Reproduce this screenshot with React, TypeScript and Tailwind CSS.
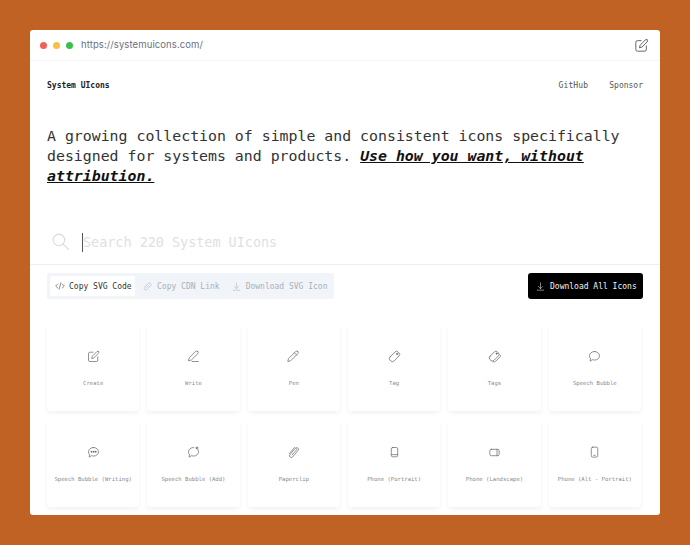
import type { ReactNode } from "react";

const Icon = ({ children, className = "w-[15px] h-[15px]" }: { children: ReactNode; className?: string }) => (
  <svg viewBox="0 0 21 21" fill="none" stroke="currentColor" strokeLinecap="round" strokeLinejoin="round" className={className}>
    {children}
  </svg>
);

const CreateIcon = () => (
  <>
    <path d="M10 4.5H5.5a2 2 0 0 0-2 2v9a2 2 0 0 0 2 2h9a2 2 0 0 0 2-2V11" />
    <path d="M17.5 3.5a1.8 1.8 0 0 1 0 2.5L11 12.5l-3 .8.8-3 6.5-6.8a1.6 1.6 0 0 1 2.2 0z" />
  </>
);

const DownloadIcon = () => (
  <>
    <path d="M10.5 3.5v11" />
    <path d="M6.5 10.5l4 4 4-4" />
    <path d="M4.5 17.5h12" />
  </>
);

const bubble = "M10.5 3.5c4 0 7 2.7 7 6s-3 6-7 6c-1 0-2-.2-2.9-.5L4.5 17l.4-3.6c-1-1-1.4-2.4-1.4-3.9 0-3.3 3-6 7-6z";

const icons: { label: string; icon: ReactNode }[] = [
  { label: "Create", icon: <CreateIcon /> },
  {
    label: "Write",
    icon: (
      <>
        <path d="M16.5 3.5a2 2 0 0 1 0 3l-9 9-4 1 1-4 9-9a2 2 0 0 1 3 0z" />
        <path d="M8.5 17.5h9" />
      </>
    ),
  },
  {
    label: "Pen",
    icon: (
      <>
        <path d="M16.5 3.5a2 2 0 0 1 0 3l-10 10-4 1 1-4 10-10a2 2 0 0 1 3 0z" />
        <path d="M12 5.5l3 3" />
      </>
    ),
  },
  {
    label: "Tag",
    icon: (
      <>
        <rect x="2.5" y="6.5" width="16" height="8" rx="3" transform="rotate(-45 10.5 10.5)" />
        <circle cx="14" cy="7" r=".8" fill="currentColor" />
      </>
    ),
  },
  {
    label: "Tags",
    icon: (
      <>
        <rect x="2.5" y="6" width="15" height="8" rx="3" transform="rotate(-45 10 10)" />
        <path d="M18.5 8.5c.5 1 .3 2-.5 2.8l-6 6c-1 1-2.5 1-3.5.2" />
        <circle cx="13.5" cy="6.5" r=".8" fill="currentColor" />
      </>
    ),
  },
  {
    label: "Speech Bubble",
    icon: <path d={bubble} />,
  },
  {
    label: "Speech Bubble (Writing)",
    icon: (
      <>
        <path d={bubble} />
        <circle cx="7.5" cy="9.5" r=".7" fill="currentColor" />
        <circle cx="10.5" cy="9.5" r=".7" fill="currentColor" />
        <circle cx="13.5" cy="9.5" r=".7" fill="currentColor" />
      </>
    ),
  },
  {
    label: "Speech Bubble (Add)",
    icon: (
      <>
        <path d="M14 4.2c2.1.9 3.5 2.8 3.5 5.3 0 3.3-3 6-7 6-1 0-2-.2-2.9-.5L4.5 17l.4-3.6c-1-1-1.4-2.4-1.4-3.9 0-3.3 3-6 7-6" />
        <path d="M15.5 2.5v3M14 4h3" />
      </>
    ),
  },
  {
    label: "Paperclip",
    icon: (
      <>
        <path d="M15 3.5a2.5 2.5 0 0 1 2 4L9.500 16.5a2.5 2.5 0 0 1-4-3L12.5 5a1.5 1.5 0 0 1 2.5 1.5l-6.5 7.5" />
        <path d="M12 3.5L4.500 12" />
      </>
    ),
  },
  {
    label: "Phone (Portrait)",
    icon: (
      <>
        <rect x="6" y="3.5" width="9" height="13" rx="2" />
        <path d="M6 13.5h9" />
      </>
    ),
  },
  {
    label: "Phone (Landscape)",
    icon: (
      <>
        <rect x="4" y="6" width="13" height="9" rx="2" />
        <path d="M14 6v9" />
      </>
    ),
  },
  {
    label: "Phone (Alt - Portrait)",
    icon: (
      <>
        <rect x="6" y="3" width="9" height="14" rx="2" />
        <path d="M9.5 14.500h2" />
      </>
    ),
  },
];

const mono = "font-['DejaVu_Sans_Mono',monospace]";

export default function App() {
  return (
    <div className="h-[545px] w-[690px] overflow-hidden bg-[#c06224] pt-[30px] pl-[30px]">
      <div className={`flex h-[485px] w-[630px] flex-col overflow-hidden rounded-[3px] bg-white ${mono}`}>
        {/* Browser bar */}
        <div className="flex h-[31px] shrink-0 items-center border-b border-[#f5f5f5] pr-[10px] pl-[10px]">
          <span className="h-[7px] w-[7px] rounded-full bg-[#f25f58]" />
          <span className="ml-[6px] h-[7px] w-[7px] rounded-full bg-[#fbbe3f]" />
          <span className="ml-[6px] h-[7px] w-[7px] rounded-full bg-[#3ac04a]" />
          <span className="ml-[8px] font-['Inter',sans-serif] text-[9.5px] tracking-[0.1px] text-[#6b7280]">https://systemuicons.com/</span>
          <div className="ml-auto text-[#444]">
            <Icon className="h-[17px] w-[17px]"><CreateIcon /></Icon>
          </div>
        </div>

        {/* Nav */}
        <nav className="mt-[19px] flex items-center justify-between pr-[17px] pl-[17px] text-[8px] leading-[12px]">
          <span className="font-bold text-[#222]">System UIcons</span>
          <div className="flex gap-[21px] text-[#555]">
            <span className="tracking-[0.15px]">GitHub</span>
            <span>Sponsor</span>
          </div>
        </nav>

        {/* Hero */}
        <p className="mt-[34px] w-[610px] pl-[17px] text-[14.86px] leading-[20px] text-[#333]">
          A growing collection of simple and consistent icons specifically designed for systems and products.{" "}
          <strong className="font-bold text-[#111] italic underline">Use how you want, without attribution.</strong>
        </p>

        {/* Search */}
        <div className="mt-[34px] flex h-[45px] shrink-0 items-center border-b border-[#eeeeee] pl-[20px] text-[#d5dae0]">
          <Icon className="h-[22px] w-[22px]">
            <circle cx="8.5" cy="8.5" r="5.5" />
            <path d="M17.5 17.5l-5-5" />
          </Icon>
          <span className="ml-[10px] h-[19px] w-px bg-[#555]" />
          <span className="pt-[2px] text-[13.45px] text-[#dde1e6]">Search 220 System UIcons</span>
        </div>

        {/* Toolbar */}
        <div className="mt-[8px] flex items-center justify-between pr-[17px] pl-[17px] leading-[12px]">
          <div className="flex h-[26px] w-[287px] items-center rounded-[2px] bg-[#f1f4f8] pl-[3px] text-[8px] text-[#a9b1bb]">
            <div className="flex h-[20px] w-[85px] items-center gap-[3px] rounded-[2px] bg-white pl-[4px] font-medium text-[#333]">
              <Icon className="h-[12px] w-[12px]">
                <path d="M6.5 7l-3.5 3.5 3.500 3.500M14.500 7l3.500 3.500-3.500 3.500M12 5l-3 11" />
              </Icon>
              <span className="pt-[2px]">Copy SVG Code</span>
            </div>
            <div className="ml-[7px] flex items-center gap-[4px]">
              <Icon className="h-[11px] w-[11px]">
                <path d="M9 12l3-3M8 8.5L5 11.5a3 3 0 0 0 4.5 4.5l3-3M13 12.5l3-3A3 3 0 0 0 11.5 5l-3 3" />
              </Icon>
              <span className="pt-[2px]">Copy CDN Link</span>
            </div>
            <div className="ml-[11px] flex items-center gap-[4px]">
              <Icon className="h-[11px] w-[11px]"><DownloadIcon /></Icon>
              <span className="pt-[2px]">Download SVG Icon</span>
            </div>
          </div>
          <div className="flex h-[26px] w-[115px] items-center gap-[4px] rounded-[3px] bg-black pl-[7px] text-[8px] text-[#f5f5f5]">
            <Icon className="h-[11px] w-[11px]"><DownloadIcon /></Icon>
            <span className="pt-[2px]">Download All Icons</span>
          </div>
        </div>

        {/* Icon grid */}
        <div className="mt-[26px] grid grid-cols-6 gap-x-[8px] gap-y-[10px] pr-[19px] pl-[17px]">
          {icons.map((item) => (
            <div
              key={item.label}
              className="flex h-[86px] flex-col items-center rounded-[3px] bg-white pt-[24px] text-center shadow-[0_2px_4px_rgba(0,0,0,0.06)]"
            >
              <div className="text-[#666]">
                <Icon>{item.icon}</Icon>
              </div>
              <span className="mt-[15px] text-[5.6px] leading-[8px] whitespace-nowrap text-[#8a8a8a]">{item.label}</span>
            </div>
          ))}
        </div>
      </div>
    </div>
  );
}
